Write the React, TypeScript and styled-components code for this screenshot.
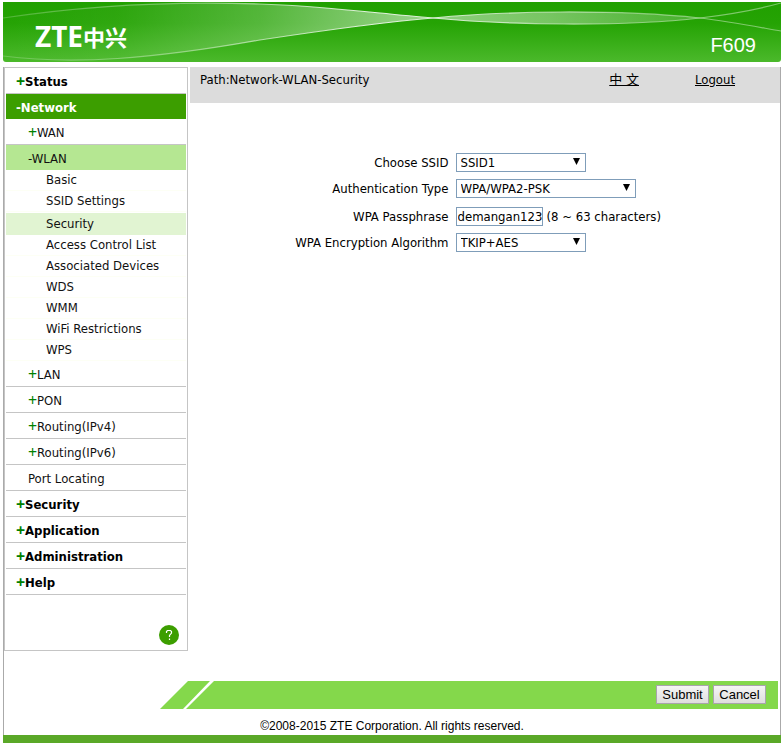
import React from "react";
import styled, { createGlobalStyle, css } from "styled-components";

const GlobalStyle = createGlobalStyle`
  * { box-sizing: border-box; }
  body {
    margin: 0;
    background: #fff;
    color: #000;
    font-family: "DejaVu Sans Condensed", "DejaVu Sans", sans-serif;
    font-size: 13px;
    line-height: 18px;
  }
`;

const Page = styled.div`
  padding: 2px 1px 1px 3px;
`;

const Header = styled.header`
  position: relative;
  display: flex;
  justify-content: space-between;
  height: 60px;
  padding: 0 25px 0 32px;
  overflow: hidden;
  border-radius: 0 0 3px 3px;
  color: #fff;
  background: linear-gradient(#21a000, #25a304 35%, #4bb92b);
`;

const Waves = styled.svg`
  position: absolute;
  inset: 0;
  width: 100%;
  height: 100%;
`;

const Logo = styled.div`
  position: relative;
  display: flex;
  align-items: center;
  padding-top: 8px;
  font: bold 28px/44px "Noto Sans", sans-serif;
`;

const LogoHan = styled.span`
  font: bold 22px/44px "Noto Sans CJK SC", sans-serif;
`;

const Model = styled.div`
  position: relative;
  align-self: flex-end;
  padding-bottom: 5px;
  font: 20px/24px "Liberation Sans", sans-serif;
`;

const Frame = styled.div`
  margin-top: 5px;
  border: solid #aaa;
  border-width: 0 1px;
`;

const Body = styled.div`
  display: flex;
  align-items: stretch;
  gap: 2px;
`;

const Nav = styled.nav`
  flex: 0 0 184px;
  display: flex;
  flex-direction: column;
  padding: 0 1px;
  border: 1px solid #c5c5c5;
`;

type Level = "top" | "group" | "page";

const NavLink = styled.a<{ $level: Level; $active?: boolean }>`
  display: flex;
  align-items: center;
  color: #111;
  text-decoration: none;
  height: 26px;
  padding-top: 2px;
  border-bottom: 1px solid #c5c5c5;

  ${(p) =>
    p.$level === "top" &&
    css`
      padding-left: 10px;
      font-weight: bold;
      color: ${p.$active ? "#fff" : "#000"};
      background: ${p.$active ? "#3c9e00" : "transparent"};
    `}
  ${(p) =>
    p.$level === "group" &&
    css`
      padding-left: 22px;
      background: ${p.$active ? "#b5e792" : "transparent"};
    `}
  ${(p) =>
    p.$level === "page" &&
    css`
      height: ${p.$active ? "22px" : "21px"};
      margin-top: ${p.$active ? "1px" : "0"};
      padding-left: 40px;
      padding-top: 0;
      border-bottom-color: ${p.$active ? "#e1f4d2" : "#fdfff5"};
      background: ${p.$active ? "#e1f4d2" : "transparent"};
    `}
  ${(p) =>
    p.$active &&
    p.$level !== "page" &&
    css`
      height: 25px;
      border-bottom: 0;
    `}
`;

const Sign = styled.span`
  width: 9px;
  padding-bottom: 2px;
  color: #008000;
  font-family: "Noto Sans", sans-serif;
  font-size: 16px;
  line-height: 16px;
`;

const HelpLink = styled.a`
  align-self: flex-end;
  margin: 30px 7px 5px 0;
  height: 20px;
`;

const Main = styled.main`
  flex: 1;
  min-width: 0;
`;

const PathBar = styled.div`
  display: flex;
  height: 36px;
  padding: 4px 45px 0 10px;
  background: #dcdcdc;
`;

const PathText = styled.span`
  flex: 1;
`;

const BarLink = styled.a`
  color: #000;
  margin-left: 56px;
  font-family: "DejaVu Sans Condensed", "DejaVu Sans", "Noto Sans CJK SC", sans-serif;
`;

const Form = styled.form`
  padding-top: 46px;
`;

const Field = styled.div<{ $tall?: boolean }>`
  display: grid;
  grid-template-columns: 45% 1fr;
  align-items: end;
  height: ${(p) => (p.$tall ? "28px" : "26px")};
  padding-bottom: 3px;
`;

const Label = styled.label`
  padding-right: 7px;
  text-align: right;
`;

const Control = styled.div`
  display: flex;
  align-items: center;
  gap: 4px;
`;

const SelectBox = styled.div<{ $wide?: boolean }>`
  position: relative;
  width: ${(p) => (p.$wide ? "180px" : "130px")};
  height: 19px;
`;

const Select = styled.select`
  appearance: none;
  width: 100%;
  height: 19px;
  padding: 0 20px 0 4px;
  border: 1px solid #7f9db9;
  border-radius: 0;
  background: #fff;
  color: #000;
  font: inherit;
  line-height: 17px;
`;

const Arrow = styled.svg`
  position: absolute;
  right: 6px;
  top: 5px;
  pointer-events: none;
`;

const TextInput = styled.input`
  width: 87px;
  height: 19px;
  padding: 0 0 0 1px;
  border: 1px solid #7f9db9;
  color: #000;
  font: inherit;
`;

const Actions = styled.div`
  position: relative;
  display: flex;
  align-items: center;
  justify-content: flex-end;
  gap: 4px;
  height: 28px;
  margin: 30px 2px 0 156px;
  padding: 0 12px 1px 0;
  background: linear-gradient(#84d84b, #84d84b) no-repeat 60px 0 / 100% 100%;
`;

const Slant = styled.svg`
  position: absolute;
  left: 0;
  top: 0;
`;

const Button = styled.button`
  height: 19px;
  width: 53px;
  padding: 0;
  border: 1px solid #a9a4ad;
  border-radius: 0;
  background: linear-gradient(#f5f5f5, #dedede);
  color: #000;
  font: 13px/16px "Liberation Sans", sans-serif;
`;

const Copyright = styled.footer`
  height: 26px;
  padding-top: 8px;
  text-align: center;
  font: 12px/18px "Liberation Sans", sans-serif;
`;

const BottomBar = styled.div`
  height: 8px;
  background: #5aa828;
`;

type Item = { level: Level; text: string; sign?: "+" | "-"; active?: boolean };

const items: Item[] = [
  { level: "top", text: "Status", sign: "+" },
  { level: "top", text: "Network", sign: "-", active: true },
  { level: "group", text: "WAN", sign: "+" },
  { level: "group", text: "WLAN", sign: "-", active: true },
  { level: "page", text: "Basic" },
  { level: "page", text: "SSID Settings" },
  { level: "page", text: "Security", active: true },
  { level: "page", text: "Access Control List" },
  { level: "page", text: "Associated Devices" },
  { level: "page", text: "WDS" },
  { level: "page", text: "WMM" },
  { level: "page", text: "WiFi Restrictions" },
  { level: "page", text: "WPS" },
  { level: "group", text: "LAN", sign: "+" },
  { level: "group", text: "PON", sign: "+" },
  { level: "group", text: "Routing(IPv4)", sign: "+" },
  { level: "group", text: "Routing(IPv6)", sign: "+" },
  { level: "group", text: "Port Locating" },
  { level: "top", text: "Security", sign: "+" },
  { level: "top", text: "Application", sign: "+" },
  { level: "top", text: "Administration", sign: "+" },
  { level: "top", text: "Help", sign: "+" },
];

function HeaderWaves() {
  const upper = "M0 16 C80 4 170 -1 257 2 C320 4 370 11 430 16 C500 23 620 25 697 16 C730 12 760 6 778 1";
  const lower = "M0 54 C70 63 150 57 257 38 C310 30 370 21 430 16 C500 9 610 7 697 16 C730 20 760 26 778 29";
  return (
    <Waves viewBox="0 0 778 60" preserveAspectRatio="none" aria-hidden="true">
      <defs>
        <linearGradient id="ribbon" x1="0" y1="0" x2="778" y2="0" gradientUnits="userSpaceOnUse">
          <stop offset="0" stopColor="#fff" stopOpacity="0" />
          <stop offset="0.15" stopColor="#fff" stopOpacity="0.05" />
          <stop offset="0.33" stopColor="#fff" stopOpacity="0.22" />
          <stop offset="0.52" stopColor="#fff" stopOpacity="0.5" />
          <stop offset="0.7" stopColor="#fff" stopOpacity="0.38" />
          <stop offset="0.9" stopColor="#fff" stopOpacity="0.15" />
          <stop offset="1" stopColor="#fff" stopOpacity="0" />
        </linearGradient>
        <linearGradient id="edge" x1="0" y1="0" x2="778" y2="0" gradientUnits="userSpaceOnUse">
          <stop offset="0" stopColor="#fff" stopOpacity="0.2" />
          <stop offset="0.1" stopColor="#fff" stopOpacity="0.3" />
          <stop offset="0.25" stopColor="#fff" stopOpacity="0.4" />
          <stop offset="0.48" stopColor="#fff" stopOpacity="0.85" />
          <stop offset="0.8" stopColor="#fff" stopOpacity="0.45" />
          <stop offset="1" stopColor="#fff" stopOpacity="0.4" />
        </linearGradient>
      </defs>
      <path
        fill="url(#ribbon)"
        d="M0 16 C80 4 170 -1 257 2 C320 4 370 11 430 16 C370 21 310 30 257 38 C150 57 70 63 0 54Z
           M430 16 C500 23 620 25 697 16 C610 7 500 9 430 16Z"
      />
      <path fill="none" stroke="url(#edge)" strokeWidth="1.2" d={upper} />
      <path fill="none" stroke="url(#edge)" strokeWidth="1.2" d={lower} />
    </Waves>
  );
}

type SelectFieldProps = { id: string; label: string; value: string; wide?: boolean };

function SelectField({ id, label, value, wide }: SelectFieldProps) {
  return (
    <Field>
      <Label htmlFor={id}>{label}</Label>
      <Control>
        <SelectBox $wide={wide}>
          <Select id={id} defaultValue={value}>
            <option>{value}</option>
          </Select>
          <Arrow width="7" height="7" viewBox="0 0 7 7" aria-hidden="true">
            <path d="M0 0H7L3.5 7Z" />
          </Arrow>
        </SelectBox>
      </Control>
    </Field>
  );
}

export default function App() {
  return (
    <Page>
      <GlobalStyle />
      <Header>
        <HeaderWaves />
        <Logo>
          ZTE<LogoHan>中兴</LogoHan>
        </Logo>
        <Model>F609</Model>
      </Header>
      <Frame>
        <Body>
          <Nav>
            {items.map((item) => (
              <NavLink key={item.level + item.text} href="#" $level={item.level} $active={item.active}>
                {item.sign === "+" && <Sign>+</Sign>}
                {item.sign === "-" && "-"}
                {item.text}
              </NavLink>
            ))}
            <HelpLink href="#" aria-label="Help">
              <svg width="20" height="20" viewBox="0 0 20 20" aria-hidden="true">
                <circle cx="10" cy="10" r="10" fill="#3c9e00" />
                <path
                  d="M7.5 8V6.5L8.5 5.5H11.5L12.5 6.5V8L10.5 10.5V12M10.5 13.5V15"
                  fill="none"
                  stroke="#fff"
                  strokeWidth="1.2"
                />
              </svg>
            </HelpLink>
          </Nav>
          <Main>
            <PathBar>
              <PathText>Path:Network-WLAN-Security</PathText>
              <BarLink href="#" lang="zh">
                中 文
              </BarLink>
              <BarLink href="#">Logout</BarLink>
            </PathBar>
            <Form id="wlan-security" onSubmit={(e) => e.preventDefault()}>
              <SelectField id="ssid" label="Choose SSID" value="SSID1" />
              <SelectField id="auth" label="Authentication Type" value="WPA/WPA2-PSK" wide />
              <Field $tall>
                <Label htmlFor="pass">WPA Passphrase</Label>
                <Control>
                  <TextInput id="pass" type="text" defaultValue="demangan123" />
                  <span>(8 ~ 63 characters)</span>
                </Control>
              </Field>
              <SelectField id="algo" label="WPA Encryption Algorithm" value="TKIP+AES" />
            </Form>
          </Main>
        </Body>
        <Actions>
          <Slant width="60" height="28" viewBox="0 0 60 28" aria-hidden="true">
            <path d="M0 28L28 0H50L23 28ZM26 28L54 0H60V28Z" fill="#84d84b" />
          </Slant>
          <Button type="submit" form="wlan-security">Submit</Button>
          <Button type="reset" form="wlan-security">Cancel</Button>
        </Actions>
        <Copyright>©2008-2015 ZTE Corporation. All rights reserved.</Copyright>
      </Frame>
      <BottomBar />
    </Page>
  );
}
